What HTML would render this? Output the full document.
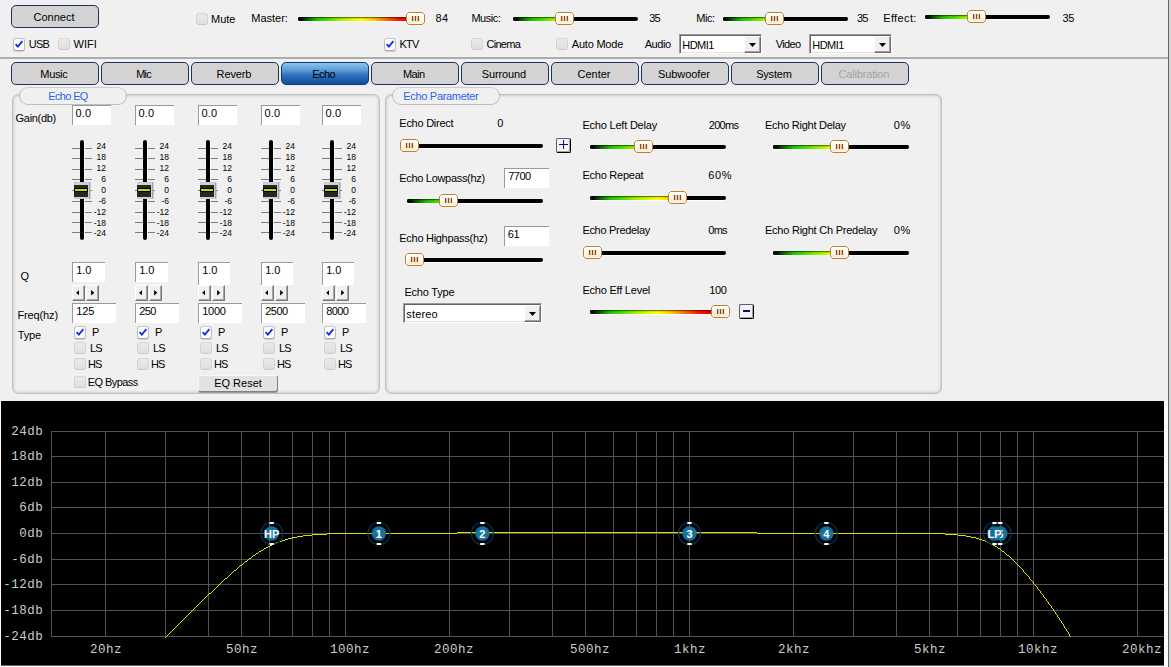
<!DOCTYPE html>
<html><head><meta charset="utf-8"><title>Echo</title><style>
*{box-sizing:border-box;margin:0;padding:0}
html,body{width:1171px;height:667px;overflow:hidden;background:#f0f0f0}
body{position:relative;font-family:"Liberation Sans",sans-serif;font-size:11px;color:#000}
body>div,body>svg{position:absolute}
.t{white-space:nowrap;line-height:13px;height:13px}
.blue{color:#2f62ee}
.btn{border:1px solid #1b3358;border-radius:5px;background:#d3d3d3;text-align:center;line-height:22px}
.btn span{position:relative;top:0px;left:-1px}
.btn.act{background:linear-gradient(#8ec6ec 0%,#5a9ad6 35%,#2e6fba 60%,#0f4c9c 100%);border-color:#0c3a7a}
.btn.dis{color:#a4a4a4}
.cb{width:12px;height:12px;border:1px solid;border-color:#d6d6d6 #d2d2d2 #cacaca;border-radius:3px;background:linear-gradient(#eaeaea,#dfdfdf)}
.cb.on{background:#fff;border-color:#c4c4c4 #bdbdbd #a6a6a6;height:13px;margin-top:-0.5px;box-shadow:0 1px 0 rgba(150,150,150,.35)}
.cb svg{position:absolute;left:-1px;top:-1px}
.gr{height:4.5px;border-radius:2.25px;background:#000;box-shadow:0 1px 0 rgba(255,255,255,.9)}
.gf{position:absolute;left:0;top:0;height:4.5px;overflow:hidden;border-radius:2.25px 0 0 2.25px}
.gg{height:4.5px;background:linear-gradient(90deg,#000 0%,#001800 3%,#0c6a00 8%,#22c400 15%,#4ee000 24%,#98f200 33%,#d8fa00 42%,#ffff00 50%,#ffc800 60%,#ff6a00 70%,#ff1800 79%,#f00000 88%,#e80000 100%)}
.gs{position:absolute;left:0;top:0;right:0;height:4.5px;border-radius:2.25px;background:linear-gradient(rgba(0,0,0,.7) 0%,rgba(0,0,0,.25) 28%,rgba(0,0,0,0) 45%)}
.hd{overflow:visible}
.in{background:#fff;border-top:1px solid #9a9a9a;border-left:1px solid #9a9a9a}
.in span{position:absolute;left:4px;top:1px;line-height:13px;white-space:nowrap}
.co{height:20px;background:#fff;border:1px solid;border-color:#9c9c9c #fff #fff #9c9c9c;box-shadow:inset 1px 1px 0 #646464,inset -1px -1px 0 #e3e3e3}
.co span{position:absolute;left:2.3px;top:4px;line-height:13px}
.ab{position:absolute;right:0px;top:1px;width:17px;height:17px;background:#f0f0f0;border:1px solid;border-color:#fff #6c6c6c #6c6c6c #fff;box-shadow:inset -1px -1px 0 #a0a0a0}
.ab svg{position:absolute;left:4px;top:6px}
.hl{left:0;top:57px;width:1168px;height:2px;background:#adadad}
.vl{left:1168px;top:0;width:1px;height:667px;background:#666}
.vl2{left:1169px;top:0;width:2px;height:667px;background:#d6d6d6}
.gb{border:1px solid #c2c2c2;border-radius:6px;box-shadow:inset 0 0 2.5px 0.5px rgba(0,0,0,.22)}
.pill{width:108px;height:18px;border:1px solid;border-color:#cdcdcd #bebebe #bebebe;border-radius:9px;background:#f0f0f0}
.tk{width:20px;height:1px;background:#7c7c7c}
.vt{width:4px;height:100px;background:#000;border-radius:2px;box-shadow:1px 0 0 rgba(255,255,255,.85)}
.vh{width:16px;height:17px;background:#d0d3d6;border:1px solid #c6cacd;border-right-color:#9aa2a8;box-shadow:1px 0 0 rgba(160,168,176,.45)}
.vh:before{content:"";position:absolute;left:-1px;top:2px;width:14px;height:12px;background:#262626}
.vh b{position:absolute;left:-1px;top:5px;width:14px;height:4px;background:#00001c}
.vh b:after{content:"";position:absolute;left:1px;top:1px;width:12px;height:2px;background:#b4e200}
.sl{width:21px;text-align:right;font-size:8.5px;line-height:10px;height:10px}
.sp{width:13px;height:16px;background:#f0f0f0;border:1px solid;border-color:#fff #7a7a7a #7a7a7a #fff;box-shadow:inset -1px -1px 0 #a6a6a6}
.sp svg{position:absolute;left:2.8px;top:4.1px}
.b3{background:#e2e2e2;border:1px solid;border-color:#f8f8f8 #808080 #808080 #f8f8f8;border-radius:3px;text-align:center;box-shadow:0 1px 0 #9a9a9a}
.b3 span{position:relative;top:1px;line-height:13px}
.pm{width:15px;height:15px;background:#f4f4f8;border:1px solid;border-color:#596066 #000 #000 #596066;border-radius:2px;box-shadow:inset -1px -1px 0 rgba(0,0,0,.32)}
.pm svg{position:absolute;left:-1px;top:-1px}
.graph{left:1px;top:401px}
.gbot{left:0;top:401px;width:1168px;height:266px;background:#fbfbfb}
</style></head><body>
<svg width="0" height="0" style="left:0;top:0"><defs><linearGradient id="hg" x1="0" y1="0" x2="0" y2="1"><stop offset="0" stop-color="#fff"/><stop offset="0.5" stop-color="#fffaf2"/><stop offset="1" stop-color="#fae3c2"/></linearGradient></defs></svg>
<div class="btn" style="left:11px;top:5px;width:88px;height:23px"><span>Connect</span></div>
<div class="cb on" style="left:13px;top:38px"><svg width="12" height="12" viewBox="0 0 12 12"><path d="M2.6 6.2 L4.8 8.6 L9.4 3.2" fill="none" stroke="#1226f4" stroke-width="1.8"/></svg></div>
<div class="t " style="left:28.8px;top:38px;letter-spacing:-0.75px;">USB</div>
<div class="cb" style="left:58px;top:38px"></div>
<div class="t " style="left:73.6px;top:38px;letter-spacing:0.029px;">WIFI</div>
<div class="cb" style="left:196px;top:13px"></div>
<div class="t " style="left:211.1px;top:13px;letter-spacing:-0.084px;">Mute</div>
<div class="t " style="left:251.3px;top:12px;letter-spacing:-0.012px;">Master:</div>
<div class="gr" style="left:298px;top:16.5px;width:126px"><div class="gf" style="width:117px"><div class="gg" style="width:126px"></div></div><div class="gs"></div></div>
<svg class="hd" style="left:406px;top:12px" width="19" height="13" viewBox="0 0 19 13"><path d="M2.7 0.5H16.3L18.5 2.7V10.3L16.3 12.5H2.7L0.5 10.3V2.7Z" fill="url(#hg)" stroke="#bf7e2c" stroke-linejoin="round"/><path d="M3.1 1.5H15.9L17.5 3.1V9.9L15.9 11.5H3.1L1.5 9.9V3.1Z" fill="none" stroke="#fff" stroke-opacity=".75"/><path d="M6.6 4V9M9.5 4V9M12.4 4V9" stroke="#8a480c" stroke-width="1.4"/></svg>
<div class="t " style="left:435.5px;top:12px;letter-spacing:0.366px;">84</div>
<div class="t " style="left:471.4px;top:12px;letter-spacing:-0.436px;">Music:</div>
<div class="gr" style="left:513px;top:16.5px;width:125px"><div class="gf" style="width:51px"><div class="gg" style="width:125px"></div></div><div class="gs"></div></div>
<svg class="hd" style="left:555px;top:12px" width="19" height="13" viewBox="0 0 19 13"><path d="M2.7 0.5H16.3L18.5 2.7V10.3L16.3 12.5H2.7L0.5 10.3V2.7Z" fill="url(#hg)" stroke="#bf7e2c" stroke-linejoin="round"/><path d="M3.1 1.5H15.9L17.5 3.1V9.9L15.9 11.5H3.1L1.5 9.9V3.1Z" fill="none" stroke="#fff" stroke-opacity=".75"/><path d="M6.6 4V9M9.5 4V9M12.4 4V9" stroke="#8a480c" stroke-width="1.4"/></svg>
<div class="t " style="left:649.2px;top:12px;letter-spacing:-0.75px;">35</div>
<div class="t " style="left:696.3px;top:12px;letter-spacing:-0.454px;">Mic:</div>
<div class="gr" style="left:723px;top:16.5px;width:125px"><div class="gf" style="width:51px"><div class="gg" style="width:125px"></div></div><div class="gs"></div></div>
<svg class="hd" style="left:765px;top:12px" width="19" height="13" viewBox="0 0 19 13"><path d="M2.7 0.5H16.3L18.5 2.7V10.3L16.3 12.5H2.7L0.5 10.3V2.7Z" fill="url(#hg)" stroke="#bf7e2c" stroke-linejoin="round"/><path d="M3.1 1.5H15.9L17.5 3.1V9.9L15.9 11.5H3.1L1.5 9.9V3.1Z" fill="none" stroke="#fff" stroke-opacity=".75"/><path d="M6.6 4V9M9.5 4V9M12.4 4V9" stroke="#8a480c" stroke-width="1.4"/></svg>
<div class="t " style="left:857.0px;top:12px;letter-spacing:-0.75px;">35</div>
<div class="t " style="left:883.2px;top:12px;letter-spacing:0.37px;">Effect:</div>
<div class="gr" style="left:925px;top:14.5px;width:125px"><div class="gf" style="width:51px"><div class="gg" style="width:125px"></div></div><div class="gs"></div></div>
<svg class="hd" style="left:967px;top:10px" width="19" height="13" viewBox="0 0 19 13"><path d="M2.7 0.5H16.3L18.5 2.7V10.3L16.3 12.5H2.7L0.5 10.3V2.7Z" fill="url(#hg)" stroke="#bf7e2c" stroke-linejoin="round"/><path d="M3.1 1.5H15.9L17.5 3.1V9.9L15.9 11.5H3.1L1.5 9.9V3.1Z" fill="none" stroke="#fff" stroke-opacity=".75"/><path d="M6.6 4V9M9.5 4V9M12.4 4V9" stroke="#8a480c" stroke-width="1.4"/></svg>
<div class="t " style="left:1062.6px;top:12px;letter-spacing:-0.534px;">35</div>
<div class="cb on" style="left:384px;top:38px"><svg width="12" height="12" viewBox="0 0 12 12"><path d="M2.6 6.2 L4.8 8.6 L9.4 3.2" fill="none" stroke="#1226f4" stroke-width="1.8"/></svg></div>
<div class="t " style="left:399.4px;top:38px;letter-spacing:-0.75px;">KTV</div>
<div class="cb" style="left:471px;top:38px"></div>
<div class="t " style="left:486.4px;top:38px;letter-spacing:-0.7px;">Cinema</div>
<div class="cb" style="left:556px;top:38px"></div>
<div class="t " style="left:571.8px;top:38px;letter-spacing:-0.212px;">Auto Mode</div>
<div class="t " style="left:644.7px;top:38px;letter-spacing:-0.433px;">Audio</div>
<div class="co" style="left:679px;top:34px;width:83px"><span style="letter-spacing:-0.531px">HDMI1</span><div class="ab"><svg width="7" height="4" viewBox="0 0 7 4"><path d="M0 0H7L3.5 4Z" fill="#000"/></svg></div></div>
<div class="t " style="left:775.7px;top:38px;letter-spacing:-0.634px;">Video</div>
<div class="co" style="left:809px;top:34px;width:83px"><span style="letter-spacing:-0.531px">HDMI1</span><div class="ab"><svg width="7" height="4" viewBox="0 0 7 4"><path d="M0 0H7L3.5 4Z" fill="#000"/></svg></div></div>
<div class="hl"></div><div class="vl"></div><div class="vl2"></div>
<div class="btn" style="left:11px;top:62px;width:88px;height:23px"><span style="letter-spacing:-0.356px;margin-right:0.356px">Music</span></div>
<div class="btn" style="left:101px;top:62px;width:88px;height:23px"><span style="letter-spacing:-0.703px;margin-right:0.703px">Mic</span></div>
<div class="btn" style="left:191px;top:62px;width:88px;height:23px"><span style="letter-spacing:-0.112px;margin-right:0.112px">Reverb</span></div>
<div class="btn act" style="left:281px;top:62px;width:88px;height:23px"><span style="letter-spacing:-0.591px;margin-right:0.591px">Echo</span></div>
<div class="btn" style="left:371px;top:62px;width:88px;height:23px"><span style="letter-spacing:-0.58px;margin-right:0.58px">Main</span></div>
<div class="btn" style="left:461px;top:62px;width:88px;height:23px"><span style="letter-spacing:-0.121px;margin-right:0.121px">Surround</span></div>
<div class="btn" style="left:551px;top:62px;width:88px;height:23px"><span style="letter-spacing:-0.023px;margin-right:0.023px">Center</span></div>
<div class="btn" style="left:641px;top:62px;width:88px;height:23px"><span style="letter-spacing:-0.073px;margin-right:0.073px">Subwoofer</span></div>
<div class="btn" style="left:731px;top:62px;width:88px;height:23px"><span style="letter-spacing:-0.195px;margin-right:0.195px">System</span></div>
<div class="btn dis" style="left:821px;top:62px;width:88px;height:23px"><span style="letter-spacing:-0.178px;margin-right:0.178px">Calibration</span></div>
<div class="gb" style="left:12px;top:94px;width:368px;height:300px"></div>
<div class="gb" style="left:385px;top:94px;width:557px;height:300px"></div>
<div class="pill" style="left:19px;top:87px"></div>
<div class="t blue" style="left:48.3px;top:90px;letter-spacing:-0.654px;">Echo EQ</div>
<div class="pill" style="left:392px;top:87px"></div>
<div class="t blue" style="left:403.3px;top:90px;letter-spacing:-0.314px;">Echo Parameter</div>
<div class="t " style="left:15.6px;top:112px;letter-spacing:-0.313px;">Gain(db)</div>
<div class="t " style="left:20.5px;top:270px;">Q</div>
<div class="t " style="left:17.4px;top:309px;letter-spacing:-0.123px;">Freq(hz)</div>
<div class="t " style="left:17.8px;top:329px;letter-spacing:-0.182px;">Type</div>
<div class="in" style="left:72px;top:105px;width:39px;height:20px"><span style="left:2.4px;letter-spacing:0.255px">0.0</span></div>
<div class="tk" style="left:72px;top:148px"></div>
<div class="tk" style="left:72px;top:158px"></div>
<div class="tk" style="left:72px;top:169px"></div>
<div class="tk" style="left:72px;top:179px"></div>
<div class="tk" style="left:72px;top:190px"></div>
<div class="tk" style="left:72px;top:201px"></div>
<div class="tk" style="left:72px;top:212px"></div>
<div class="tk" style="left:72px;top:222px"></div>
<div class="tk" style="left:72px;top:232px"></div>
<div class="vt" style="left:80px;top:140px"></div>
<div class="vh" style="left:74px;top:182px"><b></b></div>
<div class="sl" style="left:85px;top:141px">24</div>
<div class="sl" style="left:85px;top:152px">18</div>
<div class="sl" style="left:85px;top:163px">12</div>
<div class="sl" style="left:85px;top:174px">6</div>
<div class="sl" style="left:85px;top:185px">0</div>
<div class="sl" style="left:85px;top:196px">-6</div>
<div class="sl" style="left:85px;top:207px">-12</div>
<div class="sl" style="left:85px;top:217.5px">-18</div>
<div class="sl" style="left:85px;top:227.5px">-24</div>
<div class="in" style="left:72px;top:262px;width:33px;height:20px"><span style="left:3.2px;letter-spacing:-0.095px">1.0</span></div>
<div class="sp" style="left:72px;top:285px"><svg width="3.5" height="5.6" viewBox="0 0 4 7"><path d="M4 0V7L0 3.5Z"/></svg></div>
<div class="sp" style="left:86px;top:285px"><svg width="3.5" height="5.6" viewBox="0 0 4 7" style="left:4.2px"><path d="M0 0V7L4 3.5Z"/></svg></div>
<div class="in" style="left:72px;top:303px;width:44px;height:20px"><span style="left:3.2px;letter-spacing:-0.126px">125</span></div>
<div class="cb on" style="left:74px;top:326px"><svg width="12" height="12" viewBox="0 0 12 12"><path d="M2.6 6.2 L4.8 8.6 L9.4 3.2" fill="none" stroke="#1226f4" stroke-width="1.8"/></svg></div>
<div class="t " style="left:92.0px;top:326px;">P</div>
<div class="cb" style="left:74px;top:342px"></div>
<div class="t " style="left:89.9px;top:342px;letter-spacing:-0.75px;">LS</div>
<div class="cb" style="left:74px;top:358px"></div>
<div class="t " style="left:87.9px;top:358px;letter-spacing:-0.75px;">HS</div>
<div class="in" style="left:135px;top:105px;width:39px;height:20px"><span style="left:2.4px;letter-spacing:0.255px">0.0</span></div>
<div class="tk" style="left:135px;top:148px"></div>
<div class="tk" style="left:135px;top:158px"></div>
<div class="tk" style="left:135px;top:169px"></div>
<div class="tk" style="left:135px;top:179px"></div>
<div class="tk" style="left:135px;top:190px"></div>
<div class="tk" style="left:135px;top:201px"></div>
<div class="tk" style="left:135px;top:212px"></div>
<div class="tk" style="left:135px;top:222px"></div>
<div class="tk" style="left:135px;top:232px"></div>
<div class="vt" style="left:143px;top:140px"></div>
<div class="vh" style="left:137px;top:182px"><b></b></div>
<div class="sl" style="left:148px;top:141px">24</div>
<div class="sl" style="left:148px;top:152px">18</div>
<div class="sl" style="left:148px;top:163px">12</div>
<div class="sl" style="left:148px;top:174px">6</div>
<div class="sl" style="left:148px;top:185px">0</div>
<div class="sl" style="left:148px;top:196px">-6</div>
<div class="sl" style="left:148px;top:207px">-12</div>
<div class="sl" style="left:148px;top:217.5px">-18</div>
<div class="sl" style="left:148px;top:227.5px">-24</div>
<div class="in" style="left:135px;top:262px;width:33px;height:20px"><span style="left:3.2px;letter-spacing:-0.095px">1.0</span></div>
<div class="sp" style="left:135px;top:285px"><svg width="3.5" height="5.6" viewBox="0 0 4 7"><path d="M4 0V7L0 3.5Z"/></svg></div>
<div class="sp" style="left:149px;top:285px"><svg width="3.5" height="5.6" viewBox="0 0 4 7" style="left:4.2px"><path d="M0 0V7L4 3.5Z"/></svg></div>
<div class="in" style="left:135px;top:303px;width:44px;height:20px"><span style="left:3.2px;letter-spacing:-0.576px">250</span></div>
<div class="cb on" style="left:137px;top:326px"><svg width="12" height="12" viewBox="0 0 12 12"><path d="M2.6 6.2 L4.8 8.6 L9.4 3.2" fill="none" stroke="#1226f4" stroke-width="1.8"/></svg></div>
<div class="t " style="left:155.0px;top:326px;">P</div>
<div class="cb" style="left:137px;top:342px"></div>
<div class="t " style="left:152.9px;top:342px;letter-spacing:-0.75px;">LS</div>
<div class="cb" style="left:137px;top:358px"></div>
<div class="t " style="left:150.9px;top:358px;letter-spacing:-0.75px;">HS</div>
<div class="in" style="left:198px;top:105px;width:39px;height:20px"><span style="left:2.4px;letter-spacing:0.255px">0.0</span></div>
<div class="tk" style="left:198px;top:148px"></div>
<div class="tk" style="left:198px;top:158px"></div>
<div class="tk" style="left:198px;top:169px"></div>
<div class="tk" style="left:198px;top:179px"></div>
<div class="tk" style="left:198px;top:190px"></div>
<div class="tk" style="left:198px;top:201px"></div>
<div class="tk" style="left:198px;top:212px"></div>
<div class="tk" style="left:198px;top:222px"></div>
<div class="tk" style="left:198px;top:232px"></div>
<div class="vt" style="left:206px;top:140px"></div>
<div class="vh" style="left:200px;top:182px"><b></b></div>
<div class="sl" style="left:211px;top:141px">24</div>
<div class="sl" style="left:211px;top:152px">18</div>
<div class="sl" style="left:211px;top:163px">12</div>
<div class="sl" style="left:211px;top:174px">6</div>
<div class="sl" style="left:211px;top:185px">0</div>
<div class="sl" style="left:211px;top:196px">-6</div>
<div class="sl" style="left:211px;top:207px">-12</div>
<div class="sl" style="left:211px;top:217.5px">-18</div>
<div class="sl" style="left:211px;top:227.5px">-24</div>
<div class="in" style="left:198px;top:262px;width:32px;height:23px"><span style="left:3.2px;letter-spacing:-0.095px">1.0</span></div>
<div class="sp" style="left:198px;top:285px"><svg width="3.5" height="5.6" viewBox="0 0 4 7"><path d="M4 0V7L0 3.5Z"/></svg></div>
<div class="sp" style="left:212px;top:285px"><svg width="3.5" height="5.6" viewBox="0 0 4 7" style="left:4.2px"><path d="M0 0V7L4 3.5Z"/></svg></div>
<div class="in" style="left:198px;top:303px;width:44px;height:20px"><span style="left:3.2px;letter-spacing:-0.256px">1000</span></div>
<div class="cb on" style="left:200px;top:326px"><svg width="12" height="12" viewBox="0 0 12 12"><path d="M2.6 6.2 L4.8 8.6 L9.4 3.2" fill="none" stroke="#1226f4" stroke-width="1.8"/></svg></div>
<div class="t " style="left:218.0px;top:326px;">P</div>
<div class="cb" style="left:200px;top:342px"></div>
<div class="t " style="left:215.9px;top:342px;letter-spacing:-0.75px;">LS</div>
<div class="cb" style="left:200px;top:358px"></div>
<div class="t " style="left:213.9px;top:358px;letter-spacing:-0.75px;">HS</div>
<div class="in" style="left:261px;top:105px;width:39px;height:20px"><span style="left:2.4px;letter-spacing:0.255px">0.0</span></div>
<div class="tk" style="left:261px;top:148px"></div>
<div class="tk" style="left:261px;top:158px"></div>
<div class="tk" style="left:261px;top:169px"></div>
<div class="tk" style="left:261px;top:179px"></div>
<div class="tk" style="left:261px;top:190px"></div>
<div class="tk" style="left:261px;top:201px"></div>
<div class="tk" style="left:261px;top:212px"></div>
<div class="tk" style="left:261px;top:222px"></div>
<div class="tk" style="left:261px;top:232px"></div>
<div class="vt" style="left:269px;top:140px"></div>
<div class="vh" style="left:263px;top:182px"><b></b></div>
<div class="sl" style="left:274px;top:141px">24</div>
<div class="sl" style="left:274px;top:152px">18</div>
<div class="sl" style="left:274px;top:163px">12</div>
<div class="sl" style="left:274px;top:174px">6</div>
<div class="sl" style="left:274px;top:185px">0</div>
<div class="sl" style="left:274px;top:196px">-6</div>
<div class="sl" style="left:274px;top:207px">-12</div>
<div class="sl" style="left:274px;top:217.5px">-18</div>
<div class="sl" style="left:274px;top:227.5px">-24</div>
<div class="in" style="left:261px;top:262px;width:32px;height:23px"><span style="left:3.2px;letter-spacing:-0.095px">1.0</span></div>
<div class="sp" style="left:261px;top:285px"><svg width="3.5" height="5.6" viewBox="0 0 4 7"><path d="M4 0V7L0 3.5Z"/></svg></div>
<div class="sp" style="left:275px;top:285px"><svg width="3.5" height="5.6" viewBox="0 0 4 7" style="left:4.2px"><path d="M0 0V7L4 3.5Z"/></svg></div>
<div class="in" style="left:261px;top:303px;width:44px;height:20px"><span style="left:3.2px;letter-spacing:-0.49px">2500</span></div>
<div class="cb on" style="left:263px;top:326px"><svg width="12" height="12" viewBox="0 0 12 12"><path d="M2.6 6.2 L4.8 8.6 L9.4 3.2" fill="none" stroke="#1226f4" stroke-width="1.8"/></svg></div>
<div class="t " style="left:281.0px;top:326px;">P</div>
<div class="cb" style="left:263px;top:342px"></div>
<div class="t " style="left:278.9px;top:342px;letter-spacing:-0.75px;">LS</div>
<div class="cb" style="left:263px;top:358px"></div>
<div class="t " style="left:276.9px;top:358px;letter-spacing:-0.75px;">HS</div>
<div class="in" style="left:322px;top:105px;width:39px;height:20px"><span style="left:2.4px;letter-spacing:0.255px">0.0</span></div>
<div class="tk" style="left:322px;top:148px"></div>
<div class="tk" style="left:322px;top:158px"></div>
<div class="tk" style="left:322px;top:169px"></div>
<div class="tk" style="left:322px;top:179px"></div>
<div class="tk" style="left:322px;top:190px"></div>
<div class="tk" style="left:322px;top:201px"></div>
<div class="tk" style="left:322px;top:212px"></div>
<div class="tk" style="left:322px;top:222px"></div>
<div class="tk" style="left:322px;top:232px"></div>
<div class="vt" style="left:330px;top:140px"></div>
<div class="vh" style="left:324px;top:182px"><b></b></div>
<div class="sl" style="left:335px;top:141px">24</div>
<div class="sl" style="left:335px;top:152px">18</div>
<div class="sl" style="left:335px;top:163px">12</div>
<div class="sl" style="left:335px;top:174px">6</div>
<div class="sl" style="left:335px;top:185px">0</div>
<div class="sl" style="left:335px;top:196px">-6</div>
<div class="sl" style="left:335px;top:207px">-12</div>
<div class="sl" style="left:335px;top:217.5px">-18</div>
<div class="sl" style="left:335px;top:227.5px">-24</div>
<div class="in" style="left:322px;top:262px;width:32px;height:23px"><span style="left:3.2px;letter-spacing:-0.095px">1.0</span></div>
<div class="sp" style="left:322px;top:285px"><svg width="3.5" height="5.6" viewBox="0 0 4 7"><path d="M4 0V7L0 3.5Z"/></svg></div>
<div class="sp" style="left:336px;top:285px"><svg width="3.5" height="5.6" viewBox="0 0 4 7" style="left:4.2px"><path d="M0 0V7L4 3.5Z"/></svg></div>
<div class="in" style="left:322px;top:303px;width:44px;height:20px"><span style="left:3.2px;letter-spacing:-0.556px">8000</span></div>
<div class="cb on" style="left:324px;top:326px"><svg width="12" height="12" viewBox="0 0 12 12"><path d="M2.6 6.2 L4.8 8.6 L9.4 3.2" fill="none" stroke="#1226f4" stroke-width="1.8"/></svg></div>
<div class="t " style="left:342.0px;top:326px;">P</div>
<div class="cb" style="left:324px;top:342px"></div>
<div class="t " style="left:339.9px;top:342px;letter-spacing:-0.75px;">LS</div>
<div class="cb" style="left:324px;top:358px"></div>
<div class="t " style="left:337.9px;top:358px;letter-spacing:-0.75px;">HS</div>
<div class="cb" style="left:74px;top:376px"></div>
<div class="t " style="left:87.7px;top:376px;letter-spacing:-0.553px;">EQ Bypass</div>
<div class="b3" style="left:198px;top:375px;width:80px;height:17px"><span>EQ Reset</span></div>
<div class="t " style="left:399.3px;top:117px;letter-spacing:-0.255px;">Echo Direct</div>
<div class="t " style="left:497.3px;top:117px;">0</div>
<div class="gr" style="left:407px;top:143.5px;width:136px"><div class="gf" style="width:2px"><div class="gg" style="width:136px"></div></div><div class="gs"></div></div>
<svg class="hd" style="left:400px;top:139px" width="19" height="13" viewBox="0 0 19 13"><path d="M2.7 0.5H16.3L18.5 2.7V10.3L16.3 12.5H2.7L0.5 10.3V2.7Z" fill="url(#hg)" stroke="#bf7e2c" stroke-linejoin="round"/><path d="M3.1 1.5H15.9L17.5 3.1V9.9L15.9 11.5H3.1L1.5 9.9V3.1Z" fill="none" stroke="#fff" stroke-opacity=".75"/><path d="M6.6 4V9M9.5 4V9M12.4 4V9" stroke="#8a480c" stroke-width="1.4"/></svg>
<div class="pm" style="left:556px;top:138px"><svg width="15" height="15" viewBox="0 0 15 15"><path d="M3 6.5H12M7.5 2V11" stroke="#10106c" stroke-width="1" fill="none"/></svg></div>
<div class="t " style="left:399.3px;top:172px;letter-spacing:-0.312px;">Echo Lowpass(hz)</div>
<div class="in" style="left:504px;top:168px;width:45px;height:20px"><span style="left:3.2px;letter-spacing:-0.523px">7700</span></div>
<div class="gr" style="left:407px;top:198.5px;width:136px"><div class="gf" style="width:41px"><div class="gg" style="width:136px"></div></div><div class="gs"></div></div>
<svg class="hd" style="left:439px;top:194px" width="19" height="13" viewBox="0 0 19 13"><path d="M2.7 0.5H16.3L18.5 2.7V10.3L16.3 12.5H2.7L0.5 10.3V2.7Z" fill="url(#hg)" stroke="#bf7e2c" stroke-linejoin="round"/><path d="M3.1 1.5H15.9L17.5 3.1V9.9L15.9 11.5H3.1L1.5 9.9V3.1Z" fill="none" stroke="#fff" stroke-opacity=".75"/><path d="M6.6 4V9M9.5 4V9M12.4 4V9" stroke="#8a480c" stroke-width="1.4"/></svg>
<div class="t " style="left:399.3px;top:232px;letter-spacing:-0.289px;">Echo Highpass(hz)</div>
<div class="in" style="left:504px;top:226px;width:45px;height:20px"><span style="left:2.8px;letter-spacing:-0.334px">61</span></div>
<div class="gr" style="left:407px;top:257.5px;width:136px"><div class="gf" style="width:7px"><div class="gg" style="width:136px"></div></div><div class="gs"></div></div>
<svg class="hd" style="left:405px;top:253px" width="19" height="13" viewBox="0 0 19 13"><path d="M2.7 0.5H16.3L18.5 2.7V10.3L16.3 12.5H2.7L0.5 10.3V2.7Z" fill="url(#hg)" stroke="#bf7e2c" stroke-linejoin="round"/><path d="M3.1 1.5H15.9L17.5 3.1V9.9L15.9 11.5H3.1L1.5 9.9V3.1Z" fill="none" stroke="#fff" stroke-opacity=".75"/><path d="M6.6 4V9M9.5 4V9M12.4 4V9" stroke="#8a480c" stroke-width="1.4"/></svg>
<div class="t " style="left:404.4px;top:286px;letter-spacing:-0.197px;">Echo Type</div>
<div class="co" style="left:403px;top:303px;width:139px"><span style="letter-spacing:0.146px">stereo</span><div class="ab"><svg width="7" height="4" viewBox="0 0 7 4"><path d="M0 0H7L3.5 4Z" fill="#000"/></svg></div></div>
<div class="t " style="left:582.4px;top:119px;letter-spacing:-0.204px;">Echo Left Delay</div>
<div class="t " style="left:708.7px;top:119px;letter-spacing:-0.654px;">200ms</div>
<div class="gr" style="left:590px;top:144.5px;width:136px"><div class="gf" style="width:53px"><div class="gg" style="width:136px"></div></div><div class="gs"></div></div>
<svg class="hd" style="left:634px;top:140px" width="19" height="13" viewBox="0 0 19 13"><path d="M2.7 0.5H16.3L18.5 2.7V10.3L16.3 12.5H2.7L0.5 10.3V2.7Z" fill="url(#hg)" stroke="#bf7e2c" stroke-linejoin="round"/><path d="M3.1 1.5H15.9L17.5 3.1V9.9L15.9 11.5H3.1L1.5 9.9V3.1Z" fill="none" stroke="#fff" stroke-opacity=".75"/><path d="M6.6 4V9M9.5 4V9M12.4 4V9" stroke="#8a480c" stroke-width="1.4"/></svg>
<div class="t " style="left:582.4px;top:169px;letter-spacing:-0.24px;">Echo Repeat</div>
<div class="t " style="left:708.3px;top:169px;letter-spacing:0.6px;">60%</div>
<div class="gr" style="left:590px;top:195.5px;width:136px"><div class="gf" style="width:87px"><div class="gg" style="width:136px"></div></div><div class="gs"></div></div>
<svg class="hd" style="left:668px;top:191px" width="19" height="13" viewBox="0 0 19 13"><path d="M2.7 0.5H16.3L18.5 2.7V10.3L16.3 12.5H2.7L0.5 10.3V2.7Z" fill="url(#hg)" stroke="#bf7e2c" stroke-linejoin="round"/><path d="M3.1 1.5H15.9L17.5 3.1V9.9L15.9 11.5H3.1L1.5 9.9V3.1Z" fill="none" stroke="#fff" stroke-opacity=".75"/><path d="M6.6 4V9M9.5 4V9M12.4 4V9" stroke="#8a480c" stroke-width="1.4"/></svg>
<div class="t " style="left:582.4px;top:224px;letter-spacing:-0.303px;">Echo Predelay</div>
<div class="t " style="left:708.3px;top:224px;letter-spacing:-0.75px;">0ms</div>
<div class="gr" style="left:590px;top:250.5px;width:136px"><div class="gf" style="width:2px"><div class="gg" style="width:136px"></div></div><div class="gs"></div></div>
<svg class="hd" style="left:583px;top:246px" width="19" height="13" viewBox="0 0 19 13"><path d="M2.7 0.5H16.3L18.5 2.7V10.3L16.3 12.5H2.7L0.5 10.3V2.7Z" fill="url(#hg)" stroke="#bf7e2c" stroke-linejoin="round"/><path d="M3.1 1.5H15.9L17.5 3.1V9.9L15.9 11.5H3.1L1.5 9.9V3.1Z" fill="none" stroke="#fff" stroke-opacity=".75"/><path d="M6.6 4V9M9.5 4V9M12.4 4V9" stroke="#8a480c" stroke-width="1.4"/></svg>
<div class="t " style="left:582.4px;top:284px;letter-spacing:-0.218px;">Echo Eff Level</div>
<div class="t " style="left:709.2px;top:284px;letter-spacing:-0.376px;">100</div>
<div class="gr" style="left:590px;top:309.5px;width:136px"><div class="gf" style="width:130px"><div class="gg" style="width:136px"></div></div><div class="gs"></div></div>
<svg class="hd" style="left:711px;top:305px" width="19" height="13" viewBox="0 0 19 13"><path d="M2.7 0.5H16.3L18.5 2.7V10.3L16.3 12.5H2.7L0.5 10.3V2.7Z" fill="url(#hg)" stroke="#bf7e2c" stroke-linejoin="round"/><path d="M3.1 1.5H15.9L17.5 3.1V9.9L15.9 11.5H3.1L1.5 9.9V3.1Z" fill="none" stroke="#fff" stroke-opacity=".75"/><path d="M6.6 4V9M9.5 4V9M12.4 4V9" stroke="#8a480c" stroke-width="1.4"/></svg>
<div class="pm" style="left:739px;top:304px"><svg width="15" height="15" viewBox="0 0 15 15"><path d="M4 7H11" stroke="#10106c" stroke-width="2" fill="none"/></svg></div>
<div class="t " style="left:765.0px;top:119px;letter-spacing:-0.259px;">Echo Right Delay</div>
<div class="t " style="left:893.7px;top:119px;letter-spacing:0.6px;">0%</div>
<div class="gr" style="left:773px;top:144.5px;width:136px"><div class="gf" style="width:66px"><div class="gg" style="width:136px"></div></div><div class="gs"></div></div>
<svg class="hd" style="left:830px;top:140px" width="19" height="13" viewBox="0 0 19 13"><path d="M2.7 0.5H16.3L18.5 2.7V10.3L16.3 12.5H2.7L0.5 10.3V2.7Z" fill="url(#hg)" stroke="#bf7e2c" stroke-linejoin="round"/><path d="M3.1 1.5H15.9L17.5 3.1V9.9L15.9 11.5H3.1L1.5 9.9V3.1Z" fill="none" stroke="#fff" stroke-opacity=".75"/><path d="M6.6 4V9M9.5 4V9M12.4 4V9" stroke="#8a480c" stroke-width="1.4"/></svg>
<div class="t " style="left:765.0px;top:224px;letter-spacing:-0.238px;">Echo Right Ch Predelay</div>
<div class="t " style="left:893.7px;top:224px;letter-spacing:0.6px;">0%</div>
<div class="gr" style="left:773px;top:250.5px;width:136px"><div class="gf" style="width:66px"><div class="gg" style="width:136px"></div></div><div class="gs"></div></div>
<svg class="hd" style="left:830px;top:246px" width="19" height="13" viewBox="0 0 19 13"><path d="M2.7 0.5H16.3L18.5 2.7V10.3L16.3 12.5H2.7L0.5 10.3V2.7Z" fill="url(#hg)" stroke="#bf7e2c" stroke-linejoin="round"/><path d="M3.1 1.5H15.9L17.5 3.1V9.9L15.9 11.5H3.1L1.5 9.9V3.1Z" fill="none" stroke="#fff" stroke-opacity=".75"/><path d="M6.6 4V9M9.5 4V9M12.4 4V9" stroke="#8a480c" stroke-width="1.4"/></svg>
<div class="gbot"></div>
<svg class="graph" width="1163" height="265" viewBox="1 401 1163 265">
<rect x="1" y="401" width="1163" height="264.6" fill="#000"/>
<g stroke="#525252" stroke-width="1" shape-rendering="crispEdges">
<line x1="51" y1="431.5" x2="1164" y2="431.5"/>
<line x1="51" y1="456.5" x2="1164" y2="456.5"/>
<line x1="51" y1="482.5" x2="1164" y2="482.5"/>
<line x1="51" y1="507.5" x2="1164" y2="507.5"/>
<line x1="51" y1="533.5" x2="1164" y2="533.5"/>
<line x1="51" y1="559.5" x2="1164" y2="559.5"/>
<line x1="51" y1="584.5" x2="1164" y2="584.5"/>
<line x1="51" y1="610.5" x2="1164" y2="610.5"/>
<line x1="51" y1="636.5" x2="1164" y2="636.5"/>
<line x1="51.5" y1="431" x2="51.5" y2="637"/>
<line x1="105.5" y1="431" x2="105.5" y2="637"/>
<line x1="165.5" y1="431" x2="165.5" y2="637"/>
<line x1="208.5" y1="431" x2="208.5" y2="637"/>
<line x1="241.5" y1="431" x2="241.5" y2="637"/>
<line x1="269.5" y1="431" x2="269.5" y2="637"/>
<line x1="292.5" y1="431" x2="292.5" y2="637"/>
<line x1="312.5" y1="431" x2="312.5" y2="637"/>
<line x1="329.5" y1="431" x2="329.5" y2="637"/>
<line x1="345.5" y1="431" x2="345.5" y2="637"/>
<line x1="449.5" y1="431" x2="449.5" y2="637"/>
<line x1="509.5" y1="431" x2="509.5" y2="637"/>
<line x1="552.5" y1="431" x2="552.5" y2="637"/>
<line x1="585.5" y1="431" x2="585.5" y2="637"/>
<line x1="613.5" y1="431" x2="613.5" y2="637"/>
<line x1="636.5" y1="431" x2="636.5" y2="637"/>
<line x1="656.5" y1="431" x2="656.5" y2="637"/>
<line x1="673.5" y1="431" x2="673.5" y2="637"/>
<line x1="689.5" y1="431" x2="689.5" y2="637"/>
<line x1="793.5" y1="431" x2="793.5" y2="637"/>
<line x1="853.5" y1="431" x2="853.5" y2="637"/>
<line x1="896.5" y1="431" x2="896.5" y2="637"/>
<line x1="929.5" y1="431" x2="929.5" y2="637"/>
<line x1="957.5" y1="431" x2="957.5" y2="637"/>
<line x1="980.5" y1="431" x2="980.5" y2="637"/>
<line x1="1000.5" y1="431" x2="1000.5" y2="637"/>
<line x1="1017.5" y1="431" x2="1017.5" y2="637"/>
<line x1="1033.5" y1="431" x2="1033.5" y2="637"/>
<line x1="1137.5" y1="431" x2="1137.5" y2="637"/>
</g>
<g font-family="'Liberation Mono', monospace" font-size="12.5" letter-spacing="0.5" fill="#cccccc">
<text x="43.2" y="435" text-anchor="end">24db</text>
<text x="43.2" y="460" text-anchor="end">18db</text>
<text x="43.2" y="486" text-anchor="end">12db</text>
<text x="43.2" y="511" text-anchor="end">6db</text>
<text x="43.2" y="537" text-anchor="end">0db</text>
<text x="43.2" y="563" text-anchor="end">-6db</text>
<text x="43.2" y="588" text-anchor="end">-12db</text>
<text x="43.2" y="614" text-anchor="end">-18db</text>
<text x="43.2" y="640" text-anchor="end">-24db</text>
<text x="90" y="653">20hz</text>
<text x="226" y="653">50hz</text>
<text x="330" y="653">100hz</text>
<text x="434" y="653">200hz</text>
<text x="570" y="653">500hz</text>
<text x="674" y="653">1khz</text>
<text x="778" y="653">2khz</text>
<text x="914" y="653">5khz</text>
<text x="1018" y="653">10khz</text>
<text x="1122" y="653">20khz</text>
</g>
<path d="M165 637h1v1h-1zM166 636h1v1h-1zM167 635h1v1h-1zM168 634h1v1h-1zM169 633h1v1h-1zM170 632h1v1h-1zM171 631h1v1h-1zM172 630h1v1h-1zM173 629h1v1h-1zM174 628h1v1h-1zM175 627h1v1h-1zM176 626h1v1h-1zM177 625h1v1h-1zM178 624h1v1h-1zM179 623h1v1h-1zM180 622h1v1h-1zM181 621h1v1h-1zM182 620h1v1h-1zM183 619h1v1h-1zM184 618h1v1h-1zM185 617h1v1h-1zM186 616h1v1h-1zM187 615h1v1h-1zM188 614h1v1h-1zM189 613h1v1h-1zM190 612h1v1h-1zM191 611h1v1h-1zM192 610h1v1h-1zM193 609h1v1h-1zM194 608h1v1h-1zM195 607h1v1h-1zM196 606h1v1h-1zM197 605h1v1h-1zM198 604h1v1h-1zM199 603h1v1h-1zM200 602h1v1h-1zM201 601h1v1h-1zM202 600h1v1h-1zM203 599h1v1h-1zM204 598h1v1h-1zM205 597h1v1h-1zM206 596h1v1h-1zM207 595h1v1h-1zM208 594h1v1h-1zM209 593h1v1h-1zM210 593h1v1h-1zM211 592h1v1h-1zM212 591h1v1h-1zM213 590h1v1h-1zM214 589h1v1h-1zM215 588h1v1h-1zM216 587h1v1h-1zM217 586h1v1h-1zM218 585h1v1h-1zM219 584h1v1h-1zM220 583h1v1h-1zM221 582h1v1h-1zM222 581h1v1h-1zM223 580h1v1h-1zM224 579h1v1h-1zM225 578h1v1h-1zM226 578h1v1h-1zM227 577h1v1h-1zM228 576h1v1h-1zM229 575h1v1h-1zM230 574h1v1h-1zM231 573h1v1h-1zM232 572h1v1h-1zM233 571h1v1h-1zM234 570h1v1h-1zM235 570h1v1h-1zM236 569h1v1h-1zM237 568h1v1h-1zM238 567h1v1h-1zM239 566h1v1h-1zM240 565h1v1h-1zM241 565h1v1h-1zM242 564h1v1h-1zM243 563h1v1h-1zM244 562h1v1h-1zM245 561h1v1h-1zM246 561h1v1h-1zM247 560h1v1h-1zM248 559h1v1h-1zM249 558h1v1h-1zM250 558h1v1h-1zM251 557h1v1h-1zM252 556h1v1h-1zM253 555h1v1h-1zM254 555h1v1h-1zM255 554h1v1h-1zM256 553h1v1h-1zM257 553h1v1h-1zM258 552h1v1h-1zM259 551h1v1h-1zM260 551h1v1h-1zM261 550h1v1h-1zM262 550h1v1h-1zM263 549h1v1h-1zM264 548h1v1h-1zM265 548h1v1h-1zM266 547h1v1h-1zM267 547h1v1h-1zM268 546h1v1h-1zM269 546h1v1h-1zM270 545h1v1h-1zM271 545h1v1h-1zM272 544h1v1h-1zM273 544h1v1h-1zM274 543h1v1h-1zM275 543h1v1h-1zM276 542h1v1h-1zM277 542h1v1h-1zM278 542h1v1h-1zM279 541h1v1h-1zM280 541h1v1h-1zM281 541h1v1h-1zM282 540h1v1h-1zM283 540h1v1h-1zM284 540h1v1h-1zM285 539h1v1h-1zM286 539h1v1h-1zM287 539h1v1h-1zM288 538h1v1h-1zM289 538h1v1h-1zM290 538h1v1h-1zM291 538h1v1h-1zM292 537h1v1h-1zM293 537h1v1h-1zM294 537h1v1h-1zM295 537h1v1h-1zM296 537h1v1h-1zM297 536h1v1h-1zM298 536h1v1h-1zM299 536h1v1h-1zM300 536h1v1h-1zM301 536h1v1h-1zM302 536h1v1h-1zM303 535h1v1h-1zM304 535h1v1h-1zM305 535h1v1h-1zM306 535h1v1h-1zM307 535h1v1h-1zM308 535h1v1h-1zM309 535h1v1h-1zM310 535h1v1h-1zM311 535h1v1h-1zM312 534h1v1h-1zM313 534h1v1h-1zM314 534h1v1h-1zM315 534h1v1h-1zM316 534h1v1h-1zM317 534h1v1h-1zM318 534h1v1h-1zM319 534h1v1h-1zM320 534h1v1h-1zM321 534h1v1h-1zM322 534h1v1h-1zM323 534h1v1h-1zM324 534h1v1h-1zM325 534h1v1h-1zM326 534h1v1h-1zM327 533h1v1h-1zM328 533h1v1h-1zM329 533h1v1h-1zM330 533h1v1h-1zM331 533h1v1h-1zM332 533h1v1h-1zM333 533h1v1h-1zM334 533h1v1h-1zM335 533h1v1h-1zM336 533h1v1h-1zM337 533h1v1h-1zM338 533h1v1h-1zM339 533h1v1h-1zM340 533h1v1h-1zM341 533h1v1h-1zM342 533h1v1h-1zM343 533h1v1h-1zM344 533h1v1h-1zM345 533h1v1h-1zM346 533h1v1h-1zM347 533h1v1h-1zM348 533h1v1h-1zM349 533h1v1h-1zM350 533h1v1h-1zM351 533h1v1h-1zM352 533h1v1h-1zM353 533h1v1h-1zM354 533h1v1h-1zM355 533h1v1h-1zM356 533h1v1h-1zM357 533h1v1h-1zM358 533h1v1h-1zM359 533h1v1h-1zM360 533h1v1h-1zM361 533h1v1h-1zM362 533h1v1h-1zM363 533h1v1h-1zM364 533h1v1h-1zM365 533h1v1h-1zM366 533h1v1h-1zM367 533h1v1h-1zM368 533h1v1h-1zM369 533h1v1h-1zM370 533h1v1h-1zM371 533h1v1h-1zM372 533h1v1h-1zM373 533h1v1h-1zM374 533h1v1h-1zM375 533h1v1h-1zM376 533h1v1h-1zM377 533h1v1h-1zM378 533h1v1h-1zM379 533h1v1h-1zM380 533h1v1h-1zM381 533h1v1h-1zM382 533h1v1h-1zM383 533h1v1h-1zM384 533h1v1h-1zM385 533h1v1h-1zM386 533h1v1h-1zM387 533h1v1h-1zM388 533h1v1h-1zM389 533h1v1h-1zM390 533h1v1h-1zM391 533h1v1h-1zM392 533h1v1h-1zM393 533h1v1h-1zM394 533h1v1h-1zM395 533h1v1h-1zM396 533h1v1h-1zM397 533h1v1h-1zM398 533h1v1h-1zM399 533h1v1h-1zM400 533h1v1h-1zM401 533h1v1h-1zM402 533h1v1h-1zM403 533h1v1h-1zM404 533h1v1h-1zM405 533h1v1h-1zM406 533h1v1h-1zM407 533h1v1h-1zM408 533h1v1h-1zM409 533h1v1h-1zM410 533h1v1h-1zM411 533h1v1h-1zM412 533h1v1h-1zM413 533h1v1h-1zM414 533h1v1h-1zM415 533h1v1h-1zM416 533h1v1h-1zM417 533h1v1h-1zM418 533h1v1h-1zM419 533h1v1h-1zM420 533h1v1h-1zM421 533h1v1h-1zM422 533h1v1h-1zM423 533h1v1h-1zM424 533h1v1h-1zM425 533h1v1h-1zM426 533h1v1h-1zM427 533h1v1h-1zM428 533h1v1h-1zM429 533h1v1h-1zM430 533h1v1h-1zM431 533h1v1h-1zM432 533h1v1h-1zM433 533h1v1h-1zM434 533h1v1h-1zM435 533h1v1h-1zM436 533h1v1h-1zM437 533h1v1h-1zM438 533h1v1h-1zM439 533h1v1h-1zM440 533h1v1h-1zM441 533h1v1h-1zM442 533h1v1h-1zM443 533h1v1h-1zM444 533h1v1h-1zM445 533h1v1h-1zM446 533h1v1h-1zM447 533h1v1h-1zM448 533h1v1h-1zM449 533h1v1h-1zM450 533h1v1h-1zM451 533h1v1h-1zM452 533h1v1h-1zM453 533h1v1h-1zM454 533h1v1h-1zM455 533h1v1h-1zM456 533h1v1h-1zM457 532h1v1h-1zM458 532h1v1h-1zM459 532h1v1h-1zM460 532h1v1h-1zM461 532h1v1h-1zM462 532h1v1h-1zM463 532h1v1h-1zM464 532h1v1h-1zM465 532h1v1h-1zM466 532h1v1h-1zM467 532h1v1h-1zM468 532h1v1h-1zM469 532h1v1h-1zM470 532h1v1h-1zM471 532h1v1h-1zM472 532h1v1h-1zM473 532h1v1h-1zM474 532h1v1h-1zM475 532h1v1h-1zM476 532h1v1h-1zM477 532h1v1h-1zM478 532h1v1h-1zM479 532h1v1h-1zM480 532h1v1h-1zM481 532h1v1h-1zM482 532h1v1h-1zM483 532h1v1h-1zM484 532h1v1h-1zM485 532h1v1h-1zM486 532h1v1h-1zM487 532h1v1h-1zM488 532h1v1h-1zM489 532h1v1h-1zM490 532h1v1h-1zM491 532h1v1h-1zM492 532h1v1h-1zM493 532h1v1h-1zM494 532h1v1h-1zM495 532h1v1h-1zM496 532h1v1h-1zM497 532h1v1h-1zM498 532h1v1h-1zM499 532h1v1h-1zM500 532h1v1h-1zM501 532h1v1h-1zM502 532h1v1h-1zM503 532h1v1h-1zM504 532h1v1h-1zM505 532h1v1h-1zM506 532h1v1h-1zM507 532h1v1h-1zM508 532h1v1h-1zM509 532h1v1h-1zM510 532h1v1h-1zM511 532h1v1h-1zM512 532h1v1h-1zM513 532h1v1h-1zM514 532h1v1h-1zM515 532h1v1h-1zM516 532h1v1h-1zM517 532h1v1h-1zM518 532h1v1h-1zM519 532h1v1h-1zM520 532h1v1h-1zM521 532h1v1h-1zM522 532h1v1h-1zM523 532h1v1h-1zM524 532h1v1h-1zM525 532h1v1h-1zM526 532h1v1h-1zM527 532h1v1h-1zM528 532h1v1h-1zM529 532h1v1h-1zM530 532h1v1h-1zM531 532h1v1h-1zM532 532h1v1h-1zM533 532h1v1h-1zM534 532h1v1h-1zM535 532h1v1h-1zM536 532h1v1h-1zM537 532h1v1h-1zM538 532h1v1h-1zM539 532h1v1h-1zM540 532h1v1h-1zM541 532h1v1h-1zM542 532h1v1h-1zM543 532h1v1h-1zM544 532h1v1h-1zM545 532h1v1h-1zM546 532h1v1h-1zM547 532h1v1h-1zM548 532h1v1h-1zM549 532h1v1h-1zM550 532h1v1h-1zM551 532h1v1h-1zM552 532h1v1h-1zM553 532h1v1h-1zM554 532h1v1h-1zM555 532h1v1h-1zM556 532h1v1h-1zM557 532h1v1h-1zM558 532h1v1h-1zM559 532h1v1h-1zM560 532h1v1h-1zM561 532h1v1h-1zM562 532h1v1h-1zM563 532h1v1h-1zM564 532h1v1h-1zM565 532h1v1h-1zM566 532h1v1h-1zM567 532h1v1h-1zM568 532h1v1h-1zM569 532h1v1h-1zM570 532h1v1h-1zM571 532h1v1h-1zM572 532h1v1h-1zM573 532h1v1h-1zM574 532h1v1h-1zM575 532h1v1h-1zM576 532h1v1h-1zM577 532h1v1h-1zM578 532h1v1h-1zM579 532h1v1h-1zM580 532h1v1h-1zM581 532h1v1h-1zM582 532h1v1h-1zM583 532h1v1h-1zM584 532h1v1h-1zM585 532h1v1h-1zM586 532h1v1h-1zM587 532h1v1h-1zM588 532h1v1h-1zM589 532h1v1h-1zM590 532h1v1h-1zM591 532h1v1h-1zM592 532h1v1h-1zM593 532h1v1h-1zM594 532h1v1h-1zM595 532h1v1h-1zM596 532h1v1h-1zM597 532h1v1h-1zM598 532h1v1h-1zM599 532h1v1h-1zM600 532h1v1h-1zM601 532h1v1h-1zM602 532h1v1h-1zM603 532h1v1h-1zM604 532h1v1h-1zM605 532h1v1h-1zM606 532h1v1h-1zM607 532h1v1h-1zM608 532h1v1h-1zM609 532h1v1h-1zM610 532h1v1h-1zM611 532h1v1h-1zM612 532h1v1h-1zM613 532h1v1h-1zM614 532h1v1h-1zM615 532h1v1h-1zM616 532h1v1h-1zM617 532h1v1h-1zM618 532h1v1h-1zM619 532h1v1h-1zM620 532h1v1h-1zM621 532h1v1h-1zM622 532h1v1h-1zM623 532h1v1h-1zM624 532h1v1h-1zM625 532h1v1h-1zM626 532h1v1h-1zM627 532h1v1h-1zM628 532h1v1h-1zM629 532h1v1h-1zM630 532h1v1h-1zM631 532h1v1h-1zM632 532h1v1h-1zM633 532h1v1h-1zM634 532h1v1h-1zM635 532h1v1h-1zM636 532h1v1h-1zM637 532h1v1h-1zM638 532h1v1h-1zM639 532h1v1h-1zM640 532h1v1h-1zM641 532h1v1h-1zM642 532h1v1h-1zM643 532h1v1h-1zM644 532h1v1h-1zM645 532h1v1h-1zM646 532h1v1h-1zM647 532h1v1h-1zM648 532h1v1h-1zM649 532h1v1h-1zM650 532h1v1h-1zM651 532h1v1h-1zM652 532h1v1h-1zM653 532h1v1h-1zM654 532h1v1h-1zM655 532h1v1h-1zM656 532h1v1h-1zM657 532h1v1h-1zM658 532h1v1h-1zM659 532h1v1h-1zM660 532h1v1h-1zM661 532h1v1h-1zM662 532h1v1h-1zM663 532h1v1h-1zM664 532h1v1h-1zM665 532h1v1h-1zM666 532h1v1h-1zM667 532h1v1h-1zM668 532h1v1h-1zM669 532h1v1h-1zM670 532h1v1h-1zM671 532h1v1h-1zM672 532h1v1h-1zM673 532h1v1h-1zM674 532h1v1h-1zM675 532h1v1h-1zM676 532h1v1h-1zM677 532h1v1h-1zM678 532h1v1h-1zM679 532h1v1h-1zM680 532h1v1h-1zM681 532h1v1h-1zM682 532h1v1h-1zM683 532h1v1h-1zM684 532h1v1h-1zM685 532h1v1h-1zM686 532h1v1h-1zM687 532h1v1h-1zM688 532h1v1h-1zM689 532h1v1h-1zM690 532h1v1h-1zM691 532h1v1h-1zM692 532h1v1h-1zM693 532h1v1h-1zM694 532h1v1h-1zM695 532h1v1h-1zM696 532h1v1h-1zM697 532h1v1h-1zM698 532h1v1h-1zM699 532h1v1h-1zM700 532h1v1h-1zM701 532h1v1h-1zM702 532h1v1h-1zM703 532h1v1h-1zM704 532h1v1h-1zM705 532h1v1h-1zM706 532h1v1h-1zM707 532h1v1h-1zM708 532h1v1h-1zM709 532h1v1h-1zM710 532h1v1h-1zM711 532h1v1h-1zM712 532h1v1h-1zM713 532h1v1h-1zM714 532h1v1h-1zM715 532h1v1h-1zM716 532h1v1h-1zM717 532h1v1h-1zM718 532h1v1h-1zM719 532h1v1h-1zM720 532h1v1h-1zM721 532h1v1h-1zM722 532h1v1h-1zM723 532h1v1h-1zM724 532h1v1h-1zM725 532h1v1h-1zM726 532h1v1h-1zM727 532h1v1h-1zM728 532h1v1h-1zM729 532h1v1h-1zM730 532h1v1h-1zM731 532h1v1h-1zM732 532h1v1h-1zM733 532h1v1h-1zM734 532h1v1h-1zM735 532h1v1h-1zM736 532h1v1h-1zM737 532h1v1h-1zM738 532h1v1h-1zM739 532h1v1h-1zM740 532h1v1h-1zM741 532h1v1h-1zM742 532h1v1h-1zM743 532h1v1h-1zM744 532h1v1h-1zM745 532h1v1h-1zM746 532h1v1h-1zM747 532h1v1h-1zM748 532h1v1h-1zM749 532h1v1h-1zM750 532h1v1h-1zM751 532h1v1h-1zM752 532h1v1h-1zM753 532h1v1h-1zM754 532h1v1h-1zM755 532h1v1h-1zM756 532h1v1h-1zM757 533h1v1h-1zM758 533h1v1h-1zM759 533h1v1h-1zM760 533h1v1h-1zM761 533h1v1h-1zM762 533h1v1h-1zM763 533h1v1h-1zM764 533h1v1h-1zM765 533h1v1h-1zM766 533h1v1h-1zM767 533h1v1h-1zM768 533h1v1h-1zM769 533h1v1h-1zM770 533h1v1h-1zM771 533h1v1h-1zM772 533h1v1h-1zM773 533h1v1h-1zM774 533h1v1h-1zM775 533h1v1h-1zM776 533h1v1h-1zM777 533h1v1h-1zM778 533h1v1h-1zM779 533h1v1h-1zM780 533h1v1h-1zM781 533h1v1h-1zM782 533h1v1h-1zM783 533h1v1h-1zM784 533h1v1h-1zM785 533h1v1h-1zM786 533h1v1h-1zM787 533h1v1h-1zM788 533h1v1h-1zM789 533h1v1h-1zM790 533h1v1h-1zM791 533h1v1h-1zM792 533h1v1h-1zM793 533h1v1h-1zM794 533h1v1h-1zM795 533h1v1h-1zM796 533h1v1h-1zM797 533h1v1h-1zM798 533h1v1h-1zM799 533h1v1h-1zM800 533h1v1h-1zM801 533h1v1h-1zM802 533h1v1h-1zM803 533h1v1h-1zM804 533h1v1h-1zM805 533h1v1h-1zM806 533h1v1h-1zM807 533h1v1h-1zM808 533h1v1h-1zM809 533h1v1h-1zM810 533h1v1h-1zM811 533h1v1h-1zM812 533h1v1h-1zM813 533h1v1h-1zM814 533h1v1h-1zM815 533h1v1h-1zM816 533h1v1h-1zM817 533h1v1h-1zM818 533h1v1h-1zM819 533h1v1h-1zM820 533h1v1h-1zM821 533h1v1h-1zM822 533h1v1h-1zM823 533h1v1h-1zM824 533h1v1h-1zM825 533h1v1h-1zM826 533h1v1h-1zM827 533h1v1h-1zM828 533h1v1h-1zM829 533h1v1h-1zM830 533h1v1h-1zM831 533h1v1h-1zM832 533h1v1h-1zM833 533h1v1h-1zM834 533h1v1h-1zM835 533h1v1h-1zM836 533h1v1h-1zM837 533h1v1h-1zM838 533h1v1h-1zM839 533h1v1h-1zM840 533h1v1h-1zM841 533h1v1h-1zM842 533h1v1h-1zM843 533h1v1h-1zM844 533h1v1h-1zM845 533h1v1h-1zM846 533h1v1h-1zM847 533h1v1h-1zM848 533h1v1h-1zM849 533h1v1h-1zM850 533h1v1h-1zM851 533h1v1h-1zM852 533h1v1h-1zM853 533h1v1h-1zM854 533h1v1h-1zM855 533h1v1h-1zM856 533h1v1h-1zM857 533h1v1h-1zM858 533h1v1h-1zM859 533h1v1h-1zM860 533h1v1h-1zM861 533h1v1h-1zM862 533h1v1h-1zM863 533h1v1h-1zM864 533h1v1h-1zM865 533h1v1h-1zM866 533h1v1h-1zM867 533h1v1h-1zM868 533h1v1h-1zM869 533h1v1h-1zM870 533h1v1h-1zM871 533h1v1h-1zM872 533h1v1h-1zM873 533h1v1h-1zM874 533h1v1h-1zM875 533h1v1h-1zM876 533h1v1h-1zM877 533h1v1h-1zM878 533h1v1h-1zM879 533h1v1h-1zM880 533h1v1h-1zM881 533h1v1h-1zM882 533h1v1h-1zM883 533h1v1h-1zM884 533h1v1h-1zM885 533h1v1h-1zM886 533h1v1h-1zM887 533h1v1h-1zM888 533h1v1h-1zM889 533h1v1h-1zM890 533h1v1h-1zM891 533h1v1h-1zM892 533h1v1h-1zM893 533h1v1h-1zM894 533h1v1h-1zM895 533h1v1h-1zM896 533h1v1h-1zM897 533h1v1h-1zM898 533h1v1h-1zM899 533h1v1h-1zM900 533h1v1h-1zM901 533h1v1h-1zM902 533h1v1h-1zM903 533h1v1h-1zM904 533h1v1h-1zM905 533h1v1h-1zM906 533h1v1h-1zM907 533h1v1h-1zM908 533h1v1h-1zM909 533h1v1h-1zM910 533h1v1h-1zM911 533h1v1h-1zM912 533h1v1h-1zM913 533h1v1h-1zM914 533h1v1h-1zM915 533h1v1h-1zM916 533h1v1h-1zM917 533h1v1h-1zM918 533h1v1h-1zM919 533h1v1h-1zM920 533h1v1h-1zM921 533h1v1h-1zM922 533h1v1h-1zM923 533h1v1h-1zM924 533h1v1h-1zM925 533h1v1h-1zM926 533h1v1h-1zM927 533h1v1h-1zM928 533h1v1h-1zM929 533h1v1h-1zM930 533h1v1h-1zM931 533h1v1h-1zM932 533h1v1h-1zM933 533h1v1h-1zM934 533h1v1h-1zM935 533h1v1h-1zM936 533h1v1h-1zM937 533h1v1h-1zM938 533h1v1h-1zM939 533h1v1h-1zM940 533h1v1h-1zM941 533h1v1h-1zM942 533h1v1h-1zM943 533h1v1h-1zM944 533h1v1h-1zM945 534h1v1h-1zM946 534h1v1h-1zM947 534h1v1h-1zM948 534h1v1h-1zM949 534h1v1h-1zM950 534h1v1h-1zM951 534h1v1h-1zM952 534h1v1h-1zM953 534h1v1h-1zM954 534h1v1h-1zM955 534h1v1h-1zM956 534h1v1h-1zM957 534h1v1h-1zM958 535h1v1h-1zM959 535h1v1h-1zM960 535h1v1h-1zM961 535h1v1h-1zM962 535h1v1h-1zM963 535h1v1h-1zM964 535h1v1h-1zM965 535h1v1h-1zM966 536h1v1h-1zM967 536h1v1h-1zM968 536h1v1h-1zM969 536h1v1h-1zM970 536h1v1h-1zM971 537h1v1h-1zM972 537h1v1h-1zM973 537h1v1h-1zM974 537h1v1h-1zM975 537h1v1h-1zM976 538h1v1h-1zM977 538h1v1h-1zM978 538h1v1h-1zM979 539h1v1h-1zM980 539h1v1h-1zM981 539h1v1h-1zM982 540h1v1h-1zM983 540h1v1h-1zM984 540h1v1h-1zM985 541h1v1h-1zM986 541h1v1h-1zM987 542h1v1h-1zM988 542h1v1h-1zM989 543h1v1h-1zM990 543h1v1h-1zM991 544h1v1h-1zM992 544h1v1h-1zM993 545h1v1h-1zM994 545h1v1h-1zM995 546h1v1h-1zM996 546h1v1h-1zM997 547h1v1h-1zM998 548h1v1h-1zM999 548h1v1h-1zM1000 549h1v1h-1zM1001 550h1v1h-1zM1002 551h1v1h-1zM1003 551h1v1h-1zM1004 552h1v1h-1zM1005 553h1v1h-1zM1006 554h1v1h-1zM1007 555h1v1h-1zM1008 555h1v1h-1zM1009 556h1v1h-1zM1010 557h1v1h-1zM1011 558h1v1h-1zM1012 559h1v1h-1zM1013 560h1v1h-1zM1014 561h1v1h-1zM1015 562h1v1h-1zM1016 563h1v1h-1zM1017 564h1v1h-1zM1018 565h1v1h-1zM1019 566h1v1h-1zM1020 567h1v1h-1zM1021 568h1v1h-1zM1022 569h1v1h-1zM1023 570h1v2h-1zM1024 572h1v1h-1zM1025 573h1v1h-1zM1026 574h1v1h-1zM1027 575h1v1h-1zM1028 576h1v1h-1zM1029 577h1v2h-1zM1030 579h1v1h-1zM1031 580h1v1h-1zM1032 581h1v1h-1zM1033 582h1v2h-1zM1034 584h1v1h-1zM1035 585h1v1h-1zM1036 586h1v1h-1zM1037 587h1v2h-1zM1038 589h1v1h-1zM1039 590h1v1h-1zM1040 591h1v2h-1zM1041 593h1v1h-1zM1042 594h1v1h-1zM1043 595h1v2h-1zM1044 597h1v1h-1zM1045 598h1v1h-1zM1046 599h1v2h-1zM1047 601h1v1h-1zM1048 602h1v2h-1zM1049 604h1v1h-1zM1050 605h1v1h-1zM1051 606h1v2h-1zM1052 608h1v1h-1zM1053 609h1v2h-1zM1054 611h1v1h-1zM1055 612h1v2h-1zM1056 614h1v1h-1zM1057 615h1v2h-1zM1058 617h1v1h-1zM1059 618h1v2h-1zM1060 620h1v1h-1zM1061 621h1v2h-1zM1062 623h1v1h-1zM1063 624h1v2h-1zM1064 626h1v2h-1zM1065 628h1v1h-1zM1066 629h1v2h-1zM1067 631h1v1h-1zM1068 632h1v2h-1zM1069 634h1v2h-1zM1070 636h1v1h-1z" fill="#dede00" shape-rendering="crispEdges"/>
<circle cx="271.7" cy="533.5" r="11" fill="none" stroke="#0b3450" stroke-width="1.1"/>
<circle cx="378.9" cy="533.5" r="11" fill="none" stroke="#0b3450" stroke-width="1.1"/>
<circle cx="482.4" cy="533.5" r="11" fill="none" stroke="#0b3450" stroke-width="1.1"/>
<circle cx="689.5" cy="533.5" r="11" fill="none" stroke="#0b3450" stroke-width="1.1"/>
<circle cx="826.4" cy="533.5" r="11" fill="none" stroke="#0b3450" stroke-width="1.1"/>
<circle cx="1000.2" cy="533.5" r="11" fill="none" stroke="#0b3450" stroke-width="1.1"/>
<circle cx="994.5" cy="533.5" r="11" fill="none" stroke="#0b3450" stroke-width="1.1"/>
<g transform="translate(271.7,533.5)">
<circle r="7.8" fill="#156f9e" fill-opacity="0.35"/><circle r="7" fill="#1876a8" fill-opacity="0.92"/>
<rect x="-2.3" y="-11.5" width="4.6" height="2" rx="0.7" fill="#fff"/><rect x="-2.3" y="9.5" width="4.6" height="2" rx="0.7" fill="#fff"/>
<text x="0" y="4" text-anchor="middle" font-family="'Liberation Sans', sans-serif" font-weight="bold" font-size="11" fill="#fff">HP</text>
</g>
<g transform="translate(378.9,533.5)">
<circle r="7.8" fill="#156f9e" fill-opacity="0.35"/><circle r="7" fill="#1876a8" fill-opacity="0.92"/>
<rect x="-2.3" y="-11.5" width="4.6" height="2" rx="0.7" fill="#fff"/><rect x="-2.3" y="9.5" width="4.6" height="2" rx="0.7" fill="#fff"/>
<text x="0" y="4" text-anchor="middle" font-family="'Liberation Sans', sans-serif" font-weight="bold" font-size="11" fill="#fff">1</text>
</g>
<g transform="translate(482.4,533.5)">
<circle r="7.8" fill="#156f9e" fill-opacity="0.35"/><circle r="7" fill="#1876a8" fill-opacity="0.92"/>
<rect x="-2.3" y="-11.5" width="4.6" height="2" rx="0.7" fill="#fff"/><rect x="-2.3" y="9.5" width="4.6" height="2" rx="0.7" fill="#fff"/>
<text x="0" y="4" text-anchor="middle" font-family="'Liberation Sans', sans-serif" font-weight="bold" font-size="11" fill="#fff">2</text>
</g>
<g transform="translate(689.5,533.5)">
<circle r="7.8" fill="#156f9e" fill-opacity="0.35"/><circle r="7" fill="#1876a8" fill-opacity="0.92"/>
<rect x="-2.3" y="-11.5" width="4.6" height="2" rx="0.7" fill="#fff"/><rect x="-2.3" y="9.5" width="4.6" height="2" rx="0.7" fill="#fff"/>
<text x="0" y="4" text-anchor="middle" font-family="'Liberation Sans', sans-serif" font-weight="bold" font-size="11" fill="#fff">3</text>
</g>
<g transform="translate(826.4,533.5)">
<circle r="7.8" fill="#156f9e" fill-opacity="0.35"/><circle r="7" fill="#1876a8" fill-opacity="0.92"/>
<rect x="-2.3" y="-11.5" width="4.6" height="2" rx="0.7" fill="#fff"/><rect x="-2.3" y="9.5" width="4.6" height="2" rx="0.7" fill="#fff"/>
<text x="0" y="4" text-anchor="middle" font-family="'Liberation Sans', sans-serif" font-weight="bold" font-size="11" fill="#fff">4</text>
</g>
<g transform="translate(1000.2,533.5)">
<circle r="7.8" fill="#156f9e" fill-opacity="0.35"/><circle r="7" fill="#1876a8" fill-opacity="0.92"/>
<rect x="-2.3" y="-11.5" width="4.6" height="2" rx="0.7" fill="#fff"/><rect x="-2.3" y="9.5" width="4.6" height="2" rx="0.7" fill="#fff"/>
<text x="0" y="4" text-anchor="middle" font-family="'Liberation Sans', sans-serif" font-weight="bold" font-size="11" fill="#fff">5</text>
</g>
<g transform="translate(994.5,533.5)">
<circle r="7.8" fill="#156f9e" fill-opacity="0.35"/><circle r="7" fill="#1876a8" fill-opacity="0.86"/>
<rect x="-2.3" y="-11.5" width="4.6" height="2" rx="0.7" fill="#fff"/><rect x="-2.3" y="9.5" width="4.6" height="2" rx="0.7" fill="#fff"/>
<text x="0" y="4" text-anchor="middle" font-family="'Liberation Sans', sans-serif" font-weight="bold" font-size="11" fill="#fff">LP</text>
</g>
</svg>
</body></html>
